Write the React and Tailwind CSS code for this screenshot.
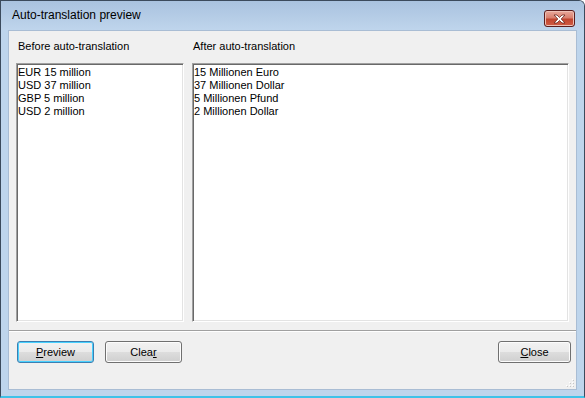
import React from 'react';

const before = ['EUR 15 million', 'USD 37 million', 'GBP 5 million', 'USD 2 million'];
const after = ['15 Millionen Euro', '37 Millionen Dollar', '5 Millionen Pfund', '2 Millionen Dollar'];

function ListBox({ items, className }) {
  return (
    <div
      className={
        'border border-t-[#a0a0a0] border-l-[#a0a0a0] border-r-white border-b-white bg-white px-[1px] py-[2px] shadow-[inset_1px_1px_0_#696969,inset_-1px_-1px_0_#e3e3e3] ' +
        className
      }
    >
      {items.map((item) => (
        <div key={item} className="h-[13px] text-[11px] leading-[13px] text-black">
          {item}
        </div>
      ))}
    </div>
  );
}

function Button({ children, primary, className = '' }) {
  return (
    <button
      className={
        'h-[22px] rounded-[3px] border text-[11px] leading-[18px] text-black bg-[linear-gradient(#f2f2f2_0%,#ebebeb_48%,#dddddd_52%,#cfcfcf_100%)] ' +
        (primary
          ? 'border-[#3c7fb1] shadow-[inset_0_0_0_1px_#48d1ff] '
          : 'border-[#707070] shadow-[inset_0_0_0_1px_#fcfcfc] ') +
        className
      }
    >
      {children}
    </button>
  );
}

export default function App() {
  return (
    <div
      className="flex h-[398px] w-[585px] flex-col overflow-hidden rounded-tr-[6px] border-t border-l border-r border-[#3b4a5c] border-b-2 border-b-[#3fc2e8] bg-[#bed5ec]"
      style={{ fontFamily: '"Liberation Sans", Arial, sans-serif' }}
    >
      {/* title bar */}
      <div className="flex h-[29px] shrink-0 items-start bg-[linear-gradient(#a9c2df,#bfd5ec)] pl-[11px] pr-[9px]">
        <div className="mt-[7px] text-[12px] leading-[15px] text-black">Auto-translation preview</div>
        <div className="ml-auto mt-[9px] flex h-[17px] w-[31px] items-center justify-center rounded-[3px] border border-[#5b1d1d] bg-[linear-gradient(#e9a99c_0%,#d9806f_45%,#c0452f_55%,#d15d45_100%)] shadow-[inset_0_0_0_1px_#eec0b5]">
          <svg width="13" height="10" viewBox="0 0 13 10">
            <path
              d="M1 1 L4 1 L6.5 3.5 L9 1 L12 1 L8.2 5 L12 9 L9 9 L6.5 6.5 L4 9 L1 9 L4.8 5 Z"
              fill="#ffffff"
              stroke="#6a2a22"
              strokeWidth="0.8"
              strokeLinejoin="round"
            />
          </svg>
        </div>
      </div>

      {/* client area */}
      <div className="mx-[7px] flex flex-1 flex-col border border-[#a9bdd4] bg-[#f0f0f0]">
        <div className="flex flex-1 gap-[8px] px-[7px] pt-[8px]">
          <div className="flex w-[168px] flex-col">
            <div className="h-[24px] pl-[2px] text-[11px] leading-[14px] text-black">Before auto-translation</div>
            <ListBox items={before} className="h-[259px]" />
          </div>
          <div className="flex flex-1 flex-col">
            <div className="h-[24px] pl-[1px] text-[11px] leading-[14px] text-black">After auto-translation</div>
            <ListBox items={after} className="h-[259px]" />
          </div>
        </div>

        <div className="mt-[8px] h-[2px] border-t border-[#a0a0a0] bg-white" />

        <div className="relative flex flex-1 items-start pl-[8px] pr-[5px] pt-[9px]">
          <Button primary className="w-[77px]">
            <span className="underline">P</span>review
          </Button>
          <Button className="ml-[11px] w-[77px]">
            Clea<span className="underline">r</span>
          </Button>
          <Button className="ml-auto w-[73px]">
            <span className="underline">C</span>lose
          </Button>
          <svg className="absolute bottom-[1px] right-[1px]" width="10" height="10" viewBox="0 0 10 10">
            {[
              [8, 2],
              [5, 5],
              [8, 5],
              [2, 8],
              [5, 8],
              [8, 8],
            ].map(([x, y]) => (
              <g key={x + '-' + y}>
                <rect x={x} y={y} width="1" height="1" fill="#c6c6c6" />
                <rect x={x - 1} y={y - 1} width="1" height="1" fill="#ffffff" />
              </g>
            ))}
          </svg>
        </div>
      </div>
      <div className="h-[6px] shrink-0" />
    </div>
  );
}
